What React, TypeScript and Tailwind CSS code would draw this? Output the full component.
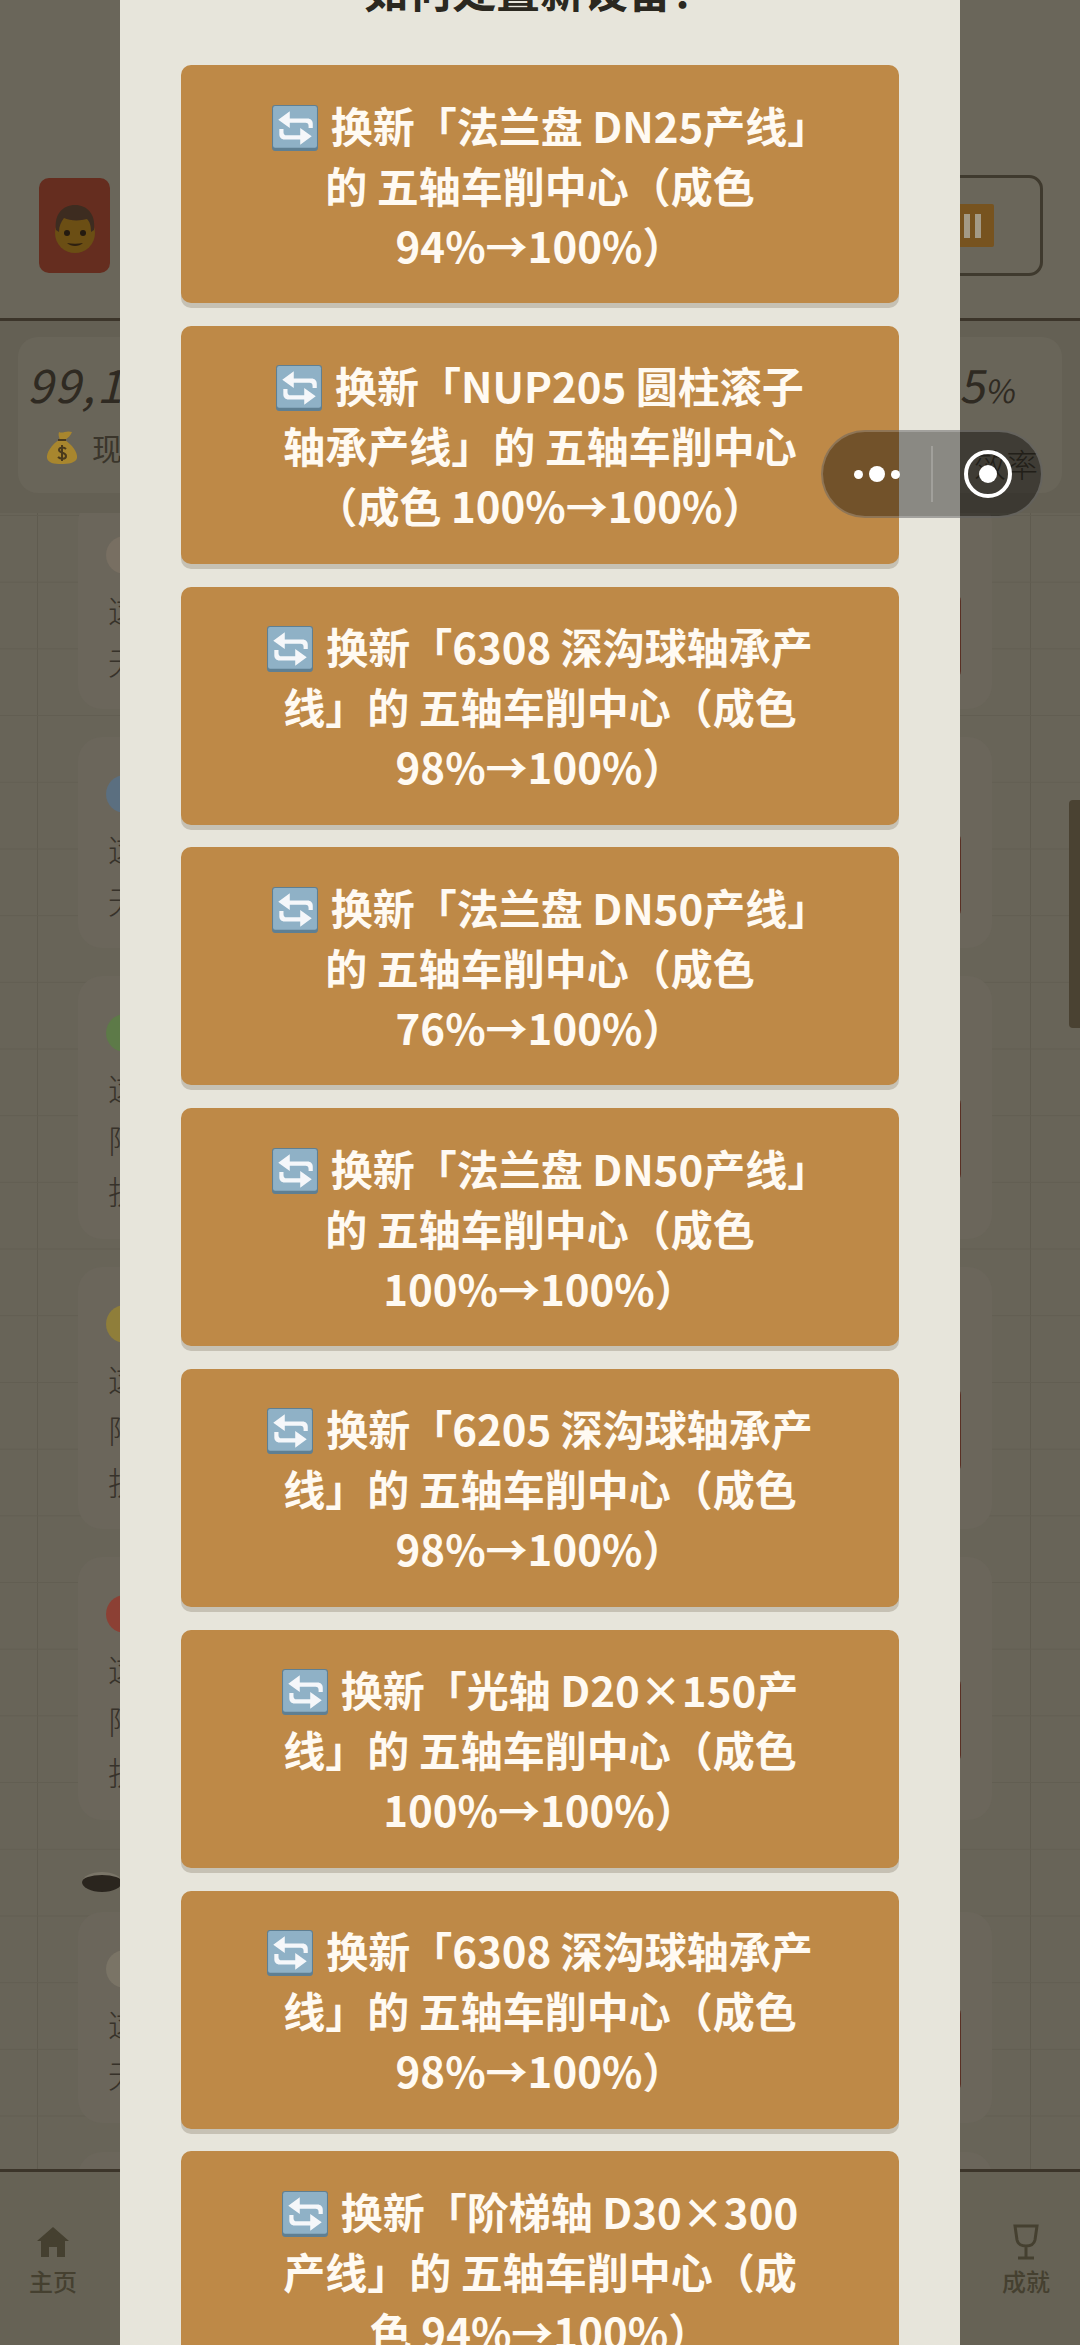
const buttons = [
  ["换新「法兰盘 DN25产线」", "的 五轴车削中心（成色", "94%→100%）"],
  ["换新「NUP205 圆柱滚子", "轴承产线」的 五轴车削中心", "（成色 100%→100%）"],
  ["换新「6308 深沟球轴承产", "线」的 五轴车削中心（成色", "98%→100%）"],
  ["换新「法兰盘 DN50产线」", "的 五轴车削中心（成色", "76%→100%）"],
  ["换新「法兰盘 DN50产线」", "的 五轴车削中心（成色", "100%→100%）"],
  ["换新「6205 深沟球轴承产", "线」的 五轴车削中心（成色", "98%→100%）"],
  ["换新「光轴 D20×150产", "线」的 五轴车削中心（成色", "100%→100%）"],
  ["换新「6308 深沟球轴承产", "线」的 五轴车削中心（成色", "98%→100%）"],
  ["换新「阶梯轴 D30×300", "产线」的 五轴车削中心（成", "色 94%→100%）"],
];

function RefreshEmoji() {
  return (
    <svg viewBox="0 0 44 44" className="mr-[13px] inline-block h-[46px] w-[46px] align-[-8px]">
      <rect x="0" y="0" width="44" height="44" rx="3" fill="#5f7f92" />
      <rect x="1" y="1" width="42" height="40" rx="2" fill="#8fb1c6" />
      <path
        d="M17 6 6 14l11 8v-5h15c2 0 3 1 3 3v2h4v-4c0-3-2-5-5-5H17z"
        fill="#f5f7fa"
      />
      <path
        d="M27 22l11 8-11 8v-5H12c-3 0-5-2-5-5v-5h4v3c0 2 1 3 3 3h13z"
        fill="#f5f7fa"
      />
    </svg>
  );
}

function ManEmoji() {
  return (
    <svg viewBox="0 0 42 50" className="h-[50px] w-[42px]">
      <ellipse cx="21" cy="29" rx="20" ry="20" fill="#6b4e14" />
      <path d="M2 26C0 10 9 1 21 1s21 9 19 25l-3 2c0-6-1-10-4-13-7 2-17 2-23-1-3 4-5 8-5 14z" fill="#3d2c20" />
      <circle cx="13" cy="29" r="3" fill="#241a10" />
      <circle cx="29" cy="29" r="3" fill="#241a10" />
      <path d="M13 39c4 4 12 4 16 0-5 1-11 1-16 0z" fill="#2e2010" />
    </svg>
  );
}

function MoneyBag() {
  return (
    <svg viewBox="0 0 32 36" className="h-[36px] w-[32px]">
      <path d="M13 3c4 2 7-2 13 0-1 3-4 6-7 8h-5c-1-3-2-5-1-8z" fill="#a8862e" />
      <path d="M13 11C6 15 0 24 1 29c1 5 7 6 14 6s15-1 16-6c1-6-6-14-12-18h-6z" fill="#a8862e" />
      <path d="M12 11h8" stroke="#4a3a1c" strokeWidth="2" />
      <path
        d="M20 20c-2-2-7-2-7 1s7 2 7 6-6 3-8 1M16 16v16"
        fill="none"
        stroke="#4a3a1c"
        strokeWidth="2"
      />
    </svg>
  );
}

function DeviceCard({ dot, lines }: { dot: string; lines: string[] }) {
  return (
    <div className="rounded-[24px] bg-[#6b665b] pb-[22px] pl-[28px] pr-[31px] pt-[38px]">
      <div className="h-[38px] w-[38px] rounded-full" style={{ backgroundColor: dot }} />
      <div className="mt-[10px] flex items-center justify-between">
        <div className="pl-[2px] text-[32px] font-light leading-[51.5px] text-[#37322a]">
          {lines.map((line) => (
            <div key={line}>{line}</div>
          ))}
        </div>
        <div className="h-[86px] w-[150px] rounded-[8px] bg-[#5a3024]" />
      </div>
    </div>
  );
}

export default function App() {
  return (
    <div
      className="relative flex h-[2345px] w-[1080px] flex-col overflow-hidden bg-[#686458]"
      style={{ fontFamily: '"Noto Sans CJK SC", "Noto Sans", sans-serif' }}
    >
      {/* page behind the dialog */}
      <header className="flex h-[321px] shrink-0 items-start justify-between border-b-[3px] border-[#3c352a] bg-[#6a665a] pl-[39px] pr-[37px] pt-[175px]">
        <div className="mt-[3px] flex h-[95px] w-[71px] items-end justify-center rounded-[10px] bg-[#652d1f] pb-[19px]">
          <ManEmoji />
        </div>
        <div className="flex h-[101px] w-[220px] items-center justify-end rounded-[14px] border-[3px] border-[#3f3a2e] pr-[46px]">
          <div className="flex h-[43px] w-[43px] items-center justify-center gap-[5px] rounded-[2px] bg-[#77531f]">
            <span className="h-[24px] w-[6px] bg-[#a39a86]" />
            <span className="h-[24px] w-[6px] bg-[#a39a86]" />
          </div>
        </div>
      </header>

      <section className="h-[192px] shrink-0 bg-[#646054] px-[18px] pt-[16px]">
        <div className="flex h-[156px] items-start justify-between rounded-[20px] bg-[#696559] pl-[14px] pr-[24px] pt-[18px]">
          <div>
            <div className="skew-x-[-14deg] text-[46px] leading-[56px] tracking-[2px] text-[#2f2a22]">99,197</div>
            <div className="mt-[14px] flex items-center gap-[14px] pl-[14px] text-[30px] leading-[44px] text-[#3a352b]">
              <MoneyBag />
              <span>现金</span>
            </div>
          </div>
          <div className="text-right">
            <div className="mr-[20px] skew-x-[-10deg] text-[46px] leading-[56px] text-[#2f2a22]">
              <span className="mr-[10px]">8</span>
              <span>5</span>
              <span className="text-[32px]">%</span>
            </div>
            <div className="mt-[24px] text-[32px] font-light leading-[44px] text-[#3a352b]">效率</div>
          </div>
        </div>
      </section>

      <main className="min-h-0 flex-1 overflow-hidden bg-[linear-gradient(#625e52_1px,transparent_1px),linear-gradient(90deg,#5f5b4f_1px,transparent_1px)] bg-[size:100%_66.7px,993px_100%] bg-[position:0_2px,37px_0] px-[88px]">
        <div className="-ml-[10px] -mt-[15px] flex flex-col gap-[28px]">
          <DeviceCard dot="#786f62" lines={["这台设备", "无异常"]} />
          <DeviceCard dot="#5b6f80" lines={["这台设备", "无异常"]} />
          <DeviceCard dot="#5d7a48" lines={["这台设备", "阵列加工", "抗压"]} />
          <DeviceCard dot="#8f7e3a" lines={["这台设备", "阵列加工", "抗压"]} />
          <DeviceCard dot="#8c4034" lines={["这台设备", "阵列加工", "抗压"]} />
        </div>
        <div className="-ml-[6px] mb-[20px] mt-[52px] h-[20px] w-[40px] rounded-[50%] border-t-[3px] border-[#7a7568] bg-[#2a251e]" />
        <div className="-ml-[10px] flex flex-col gap-[29px]">
          <DeviceCard dot="#7a7466" lines={["这台设备", "无异常"]} />
          <DeviceCard dot="#7a7466" lines={["这台设备", "无异常"]} />
        </div>
      </main>

      <nav className="flex h-[176px] shrink-0 items-start justify-between border-t-[3px] border-[#3c352a] bg-[#666255] pl-[29px] pr-[28px] pt-[55px]">
        <div className="flex w-[48px] flex-col items-center text-[#454030]">
          <svg viewBox="0 0 32 30" className="h-[30px] w-[32px]" fill="currentColor">
            <path d="M16 0 0 14h4v16h8V20h8v10h8V14h4z" />
          </svg>
          <span className="mt-[9px] text-[24px] font-medium leading-[30px]">主页</span>
        </div>
        <div className="-mt-[3px] flex w-[52px] flex-col items-center text-[#454030]">
          <svg viewBox="0 0 30 36" className="h-[36px] w-[30px]" fill="none" stroke="currentColor" strokeWidth="3">
            <path d="M4 2h22l-2 14c-1 4-4 6-9 6s-8-2-9-6zM15 22v11M7 34h16" />
          </svg>
          <span className="mt-[6px] text-[24px] font-medium leading-[30px]">成就</span>
        </div>
      </nav>

      {/* scrollbar */}
      <div className="absolute right-0 top-[800px] h-[228px] w-[11px] rounded-l-[4px] bg-[#4a4232]" />

      {/* dialog */}
      <div className="absolute inset-0 flex justify-center overflow-hidden">
        <div className="-mt-[41px] h-fit w-[840px] bg-[#e7e5db] px-[61px]">
          <h2 className="mb-[46px] text-center text-[44px] font-bold leading-[60px] text-[#2b2820]">如何处置新设备？</h2>
          <div className="flex flex-col gap-[22.8px]">
            {buttons.map((lines, i) => (
              <div
                key={i}
                className="rounded-[10px] bg-[#be8947] pb-[28.5px] pt-[29.5px] text-center text-[42px] font-bold leading-[60px] text-[#fffaf2] shadow-[0_5px_0_#c6c1b4]"
              >
                {lines.map((line, j) => (
                  <div key={j} className={line.endsWith("」") ? "-mr-[21px] whitespace-nowrap" : "whitespace-nowrap"}>
                    {j === 0 && <RefreshEmoji />}
                    {line}
                  </div>
                ))}
              </div>
            ))}
          </div>
        </div>
      </div>

      {/* mini program capsule */}
      <div className="absolute left-[821px] top-[430px] flex h-[88px] w-[222px] items-center rounded-full border-2 border-white/20 bg-black/40">
        <div className="flex w-[108px] items-center justify-center gap-[6px]">
          <span className="h-[9px] w-[9px] rounded-full bg-white" />
          <span className="h-[16px] w-[16px] rounded-full bg-white" />
          <span className="h-[9px] w-[9px] rounded-full bg-white" />
        </div>
        <div className="h-[56px] w-[2px] bg-white/20" />
        <div className="ml-[31px] flex h-[48px] w-[48px] items-center justify-center rounded-full border-[4px] border-white">
          <span className="h-[18px] w-[18px] rounded-full bg-white" />
        </div>
      </div>
    </div>
  );
}
